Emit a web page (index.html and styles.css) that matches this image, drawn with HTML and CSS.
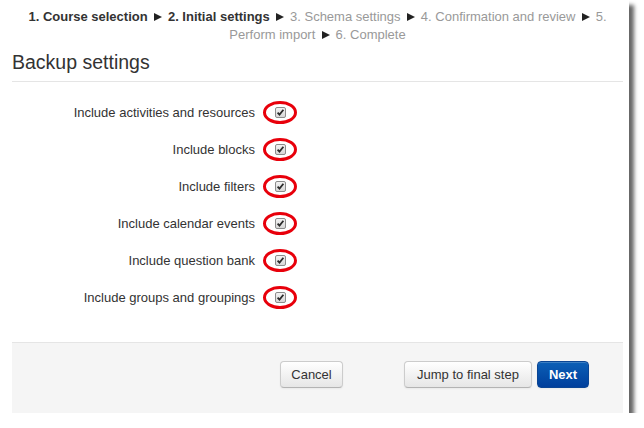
FILE: index.html
```html
<!DOCTYPE html>
<html>
<head>
<meta charset="utf-8">
<link rel="stylesheet" href="styles.css">
</head>
<body>
<div class="panel">
  <div class="progress">
    <span class="done">1. Course selection</span> <svg class="arr" width="13" height="8" viewBox="0 0 13 8"><polygon points="3,0 11,4 3,8"/></svg> <span class="done">2. Initial settings</span> <svg class="arr" width="13" height="8" viewBox="0 0 13 8"><polygon points="3,0 11,4 3,8"/></svg> <span>3. Schema settings</span> <svg class="arr" width="13" height="8" viewBox="0 0 13 8"><polygon points="3,0 11,4 3,8"/></svg> <span>4. Confirmation and review</span> <svg class="arr" width="13" height="8" viewBox="0 0 13 8"><polygon points="3,0 11,4 3,8"/></svg> <span>5.</span> <span>Perform import</span> <svg class="arr" width="13" height="8" viewBox="0 0 13 8"><polygon points="3,0 11,4 3,8"/></svg> <span>6. Complete</span>
  </div>
  <div class="legend">Backup settings</div>
  <div class="form">
    <div class="row"><label class="lbl">Include activities and resources</label><span class="ctl"><svg class="cb" width="11" height="11" viewBox="0 0 11 11"><defs><linearGradient id="g" x1="0" y1="0" x2="0" y2="1"><stop offset="0" stop-color="#f4f4f4"/><stop offset="1" stop-color="#d6d6d6"/></linearGradient></defs><rect x="0.5" y="0.5" width="10" height="10" rx="1.5" fill="url(#g)" stroke="#8c8c8c"/><path d="M2.6 5.6 L4.5 7.6 L8.4 2.8" fill="none" stroke="#2b2b2b" stroke-width="1.8"/></svg><span class="ring"></span></span></div>
    <div class="row"><label class="lbl">Include blocks</label><span class="ctl"><svg class="cb" width="11" height="11" viewBox="0 0 11 11"><rect x="0.5" y="0.5" width="10" height="10" rx="1.5" fill="url(#g)" stroke="#8c8c8c"/><path d="M2.6 5.6 L4.5 7.6 L8.4 2.8" fill="none" stroke="#2b2b2b" stroke-width="1.8"/></svg><span class="ring"></span></span></div>
    <div class="row"><label class="lbl">Include filters</label><span class="ctl"><svg class="cb" width="11" height="11" viewBox="0 0 11 11"><rect x="0.5" y="0.5" width="10" height="10" rx="1.5" fill="url(#g)" stroke="#8c8c8c"/><path d="M2.6 5.6 L4.5 7.6 L8.4 2.8" fill="none" stroke="#2b2b2b" stroke-width="1.8"/></svg><span class="ring"></span></span></div>
    <div class="row"><label class="lbl">Include calendar events</label><span class="ctl"><svg class="cb" width="11" height="11" viewBox="0 0 11 11"><rect x="0.5" y="0.5" width="10" height="10" rx="1.5" fill="url(#g)" stroke="#8c8c8c"/><path d="M2.6 5.6 L4.5 7.6 L8.4 2.8" fill="none" stroke="#2b2b2b" stroke-width="1.8"/></svg><span class="ring"></span></span></div>
    <div class="row"><label class="lbl">Include question bank</label><span class="ctl"><svg class="cb" width="11" height="11" viewBox="0 0 11 11"><rect x="0.5" y="0.5" width="10" height="10" rx="1.5" fill="url(#g)" stroke="#8c8c8c"/><path d="M2.6 5.6 L4.5 7.6 L8.4 2.8" fill="none" stroke="#2b2b2b" stroke-width="1.8"/></svg><span class="ring"></span></span></div>
    <div class="row"><label class="lbl">Include groups and groupings</label><span class="ctl"><svg class="cb" width="11" height="11" viewBox="0 0 11 11"><rect x="0.5" y="0.5" width="10" height="10" rx="1.5" fill="url(#g)" stroke="#8c8c8c"/><path d="M2.6 5.6 L4.5 7.6 L8.4 2.8" fill="none" stroke="#2b2b2b" stroke-width="1.8"/></svg><span class="ring"></span></span></div>
  </div>
  <div class="actions">
    <button class="btn btn-cancel">Cancel</button>
    <button class="btn btn-jump">Jump to final step</button>
    <button class="btn btn-primary">Next</button>
  </div>
</div>
</body>
</html>
```

FILE: styles.css
```css
html, body {
  margin: 0;
  padding: 0;
  background: #fff;
}
body {
  font-family: "Liberation Sans", Arial, sans-serif;
  font-size: 13px;
  color: #333;
}
.panel {
  box-sizing: border-box;
  width: 629px;
  height: 413px;
  padding: 0 6px 0 12px;
  background: #fff;
  box-shadow: 5px 5px 4px rgba(0, 0, 0, 0.6);
  display: flex;
  flex-direction: column;
}
.progress {
  padding-top: 8px;
  line-height: 18px;
  height: 36px;
  text-align: center;
  color: #999;
}
.progress .done {
  font-weight: bold;
  color: #333;
}
.progress .arr {
  fill: #222;
  vertical-align: baseline;
}
.legend {
  font-size: 19.5px;
  line-height: 37px;
  color: #333;
  border-bottom: 1px solid #e5e5e5;
}
.form {
  margin-top: 12px;
  display: flex;
  flex-direction: column;
}
.row {
  display: grid;
  grid-template-columns: 243px auto;
  column-gap: 20px;
  height: 37px;
  align-items: center;
}
.lbl {
  text-align: right;
}
.ctl {
  position: relative;
  width: 11px;
  height: 11px;
}
.cb {
  display: block;
}
.ring {
  position: absolute;
  left: -12px;
  top: -6px;
  width: 34px;
  height: 23px;
  box-sizing: border-box;
  border: 3px solid #e8000b;
  border-radius: 50%;
}
.actions {
  flex: 1;
  margin-top: 26px;
  background: #f5f5f5;
  border-top: 1px solid #e5e5e5;
  padding: 18px 0 0 268px;
  display: flex;
  align-items: flex-start;
}
.btn {
  box-sizing: border-box;
  height: 27px;
  padding: 0 0 1px;
  font-family: "Liberation Sans", Arial, sans-serif;
  font-size: 13px;
  color: #333;
  text-align: center;
  background: linear-gradient(#ffffff, #e6e6e6);
  border: 1px solid #cccccc;
  border-bottom-color: #b3b3b3;
  border-radius: 4px;
  box-shadow: inset 0 1px 0 rgba(255, 255, 255, 0.2), 0 1px 2px rgba(0, 0, 0, 0.05);
}
.btn-cancel {
  width: 63px;
}
.btn-jump {
  width: 128px;
  margin-left: 61px;
}
.btn-primary {
  width: 52px;
  margin-left: 5px;
  color: #fff;
  font-weight: bold;
  background: linear-gradient(#0b5fb6, #003f9c);
  border-color: #0a4594;
}
```
